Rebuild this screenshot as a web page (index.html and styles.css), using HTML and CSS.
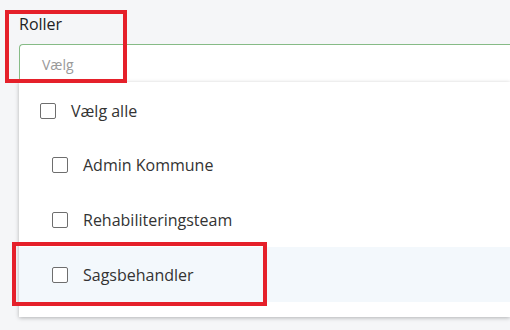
FILE: index.html
```html
<!DOCTYPE html>
<html lang="da">
<head>
  <meta charset="UTF-8" />
  <title>Roller</title>
  <link rel="stylesheet" href="styles.css">
</head>
<body>
  <div class="field">
    <label class="field-label">Roller</label>
    <div class="select-input">Vælg</div>

    <ul class="dropdown">
      <li class="option">
        <span class="check"></span>
        <span>Vælg alle</span>
      </li>
      <li class="option child">
        <span class="check"></span>
        <span>Admin Kommune</span>
      </li>
      <li class="option child">
        <span class="check"></span>
        <span>Rehabiliteringsteam</span>
      </li>
      <li class="option child hover">
        <span class="check"></span>
        <span>Sagsbehandler</span>
      </li>
    </ul>
  </div>

  <!-- annotation boxes -->
  <div class="mark mark-label"></div>
  <div class="mark mark-option"></div>
</body>
</html>
```

FILE: styles.css
```css
:root {
  --bg: #f5f6f8;
  --text: #222;
  --muted: #9a9a9a;
  --green: #86bb86;
  --hover: #f3f8fc;
  --mark: #e5202a;
}

html, body {
  margin: 0;
  height: 100%;
  overflow: hidden;
}

body {
  background: var(--bg);
  font-family: 'Open Sans', sans-serif;
  color: var(--text);
  position: relative;
}

.field {
  position: relative;
  padding: 13px 0 0 19px;
}

.field-label {
  display: block;
  font-size: 16px;
  line-height: 22px;
  margin-bottom: 9px;
}

.select-input {
  height: 40px;
  box-sizing: border-box;
  border: 1px solid var(--green);
  border-right: none;
  border-radius: 4px 0 0 4px;
  background: #fff;
  padding: 10px 0 0 22px;
  font-size: 14px;
  color: var(--muted);
}

.dropdown {
  position: absolute;
  top: 82px;
  left: 19px;
  right: 0;
  margin: 0;
  padding: 0 0 15px;
  list-style: none;
  background: #fff;
  box-shadow: 0 1px 4px rgba(0, 0, 0, 0.28);
}

.option {
  display: flex;
  align-items: center;
  gap: 15px;
  height: 55px;
  padding-left: 21px;
  font-size: 16px;
  color: #333;
}

.option:first-child {
  padding-top: 2px;
  height: 53px;
}

.option.child {
  padding-left: 33px;
}

.option.hover {
  background: var(--hover);
}

.check {
  width: 16px;
  height: 16px;
  box-sizing: border-box;
  border: 1.5px solid #6e6e6e;
  border-radius: 2px;
  background: #fff;
}

.mark {
  position: absolute;
  border: 4px solid var(--mark);
  box-sizing: border-box;
}

.mark-label {
  left: 5px;
  top: 10px;
  width: 122px;
  height: 73px;
}

.mark-option {
  left: 12px;
  top: 242px;
  width: 255px;
  height: 64px;
}
```
